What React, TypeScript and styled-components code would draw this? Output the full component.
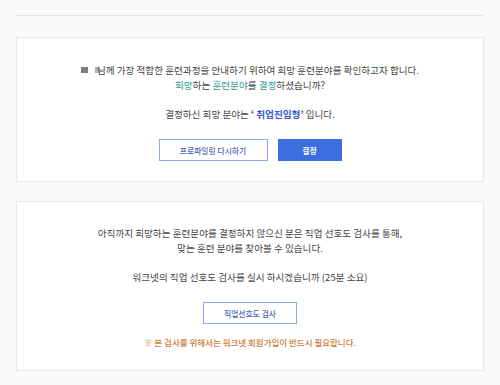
import styled, { createGlobalStyle } from "styled-components";

const GlobalStyle = createGlobalStyle`
  html, body {
    margin: 0;
    padding: 0;
    background: #fafafa;
  }
  body {
    font-family: "Noto Sans CJK KR", "Noto Sans", sans-serif;
    color: #444;
  }
`;

const Page = styled.div`
  padding: 15px 16px 0;
`;

const Rule = styled.hr`
  margin: 0 0 21px;
  border: 0;
  border-top: 1px solid #e6e6e6;
`;

const Card = styled.section<{ $top?: number; $bottom?: number }>`
  background: #fff;
  border: 1px solid #e8e8e8;
  padding: ${(p) => p.$top ?? 24}px 0 ${(p) => p.$bottom ?? 20}px;
  margin-bottom: 19px;
  display: flex;
  flex-direction: column;
  align-items: center;
  text-align: center;
`;

const Text = styled.p<{ $gap?: number }>`
  margin: ${(p) => p.$gap ?? 0}px 0 0;
  font-size: 9.6px;
  line-height: 15px;
  color: #444;
`;

const Mask = styled.span<{ $light?: boolean }>`
  display: inline-block;
  width: ${(p) => (p.$light ? 5 : 7)}px;
  height: 6px;
  margin-right: ${(p) => (p.$light ? -3 : 7)}px;
  background: ${(p) => (p.$light ? "#b0b0b0" : "#857c7c")};
  vertical-align: 1px;
`;

const Teal = styled.span`
  color: #2f9c95;
`;

const Pick = styled.strong`
  color: #3557d0;
  font-weight: 700;
`;

const Quote = styled.strong`
  color: #444;
  font-weight: 700;
`;

const Buttons = styled.div<{ $gap?: number }>`
  display: flex;
  gap: 10px;
  margin-top: ${(p) => p.$gap ?? 18}px;
`;

const Button = styled.button<{ $primary?: boolean; $w: number }>`
  width: ${(p) => p.$w}px;
  height: 22px;
  font-family: inherit;
  font-size: 7.8px;
  font-weight: ${(p) => (p.$primary ? 700 : 500)};
  border: 1px solid ${(p) => (p.$primary ? "#3d6ee0" : "#8aa8f0")};
  background: ${(p) => (p.$primary ? "#3d6ee0" : "#fff")};
  color: ${(p) => (p.$primary ? "#fff" : "#4a63b8")};
  padding: 0;
  cursor: pointer;
`;

const Notice = styled.p`
  margin: 11px 0 0;
  font-size: 8.5px;
  line-height: 14px;
  font-weight: 500;
  color: #d17a35;
`;

export default function App() {
  return (
    <>
      <GlobalStyle />
      <Page>
        <Rule />
        <Card $top={25} $bottom={20}>
          <Text>
            <Mask />
            <Mask $light />
            님께 가장 적합한 훈련과정을 안내하기 위하여 희망 훈련분야를 확인하고자 합니다.
          </Text>
          <Text>
            <Teal>희망</Teal>하는 <Teal>훈련분야</Teal>를 <Teal>결정</Teal>하셨습니까?
          </Text>
          <Text $gap={14}>
            결정하신 희망 분야는 <Quote>‘</Quote> <Pick>취업진입형</Pick>
            <Quote>’</Quote> 입니다.
          </Text>
          <Buttons $gap={17}>
            <Button $w={109}>프로파일링 다시하기</Button>
            <Button $primary $w={64}>
              결정
            </Button>
          </Buttons>
        </Card>
        <Card $top={24} $bottom={21}>
          <Text>
            아직까지 희망하는 훈련분야를 결정하지 않으신 분은 직업 선호도 검사를 통해,
          </Text>
          <Text>맞는 훈련 분야를 찾아볼 수 있습니다.</Text>
          <Text $gap={14}>워크넷의 직업 선호도 검사를 실시 하시겠습니까 (25분 소요)</Text>
          <Buttons $gap={17}>
            <Button $w={94}>직업선호도 검사</Button>
          </Buttons>
          <Notice>※ 본 검사를 위해서는 워크넷 회원가입이 반드시 필요합니다.</Notice>
        </Card>
      </Page>
    </>
  );
}
